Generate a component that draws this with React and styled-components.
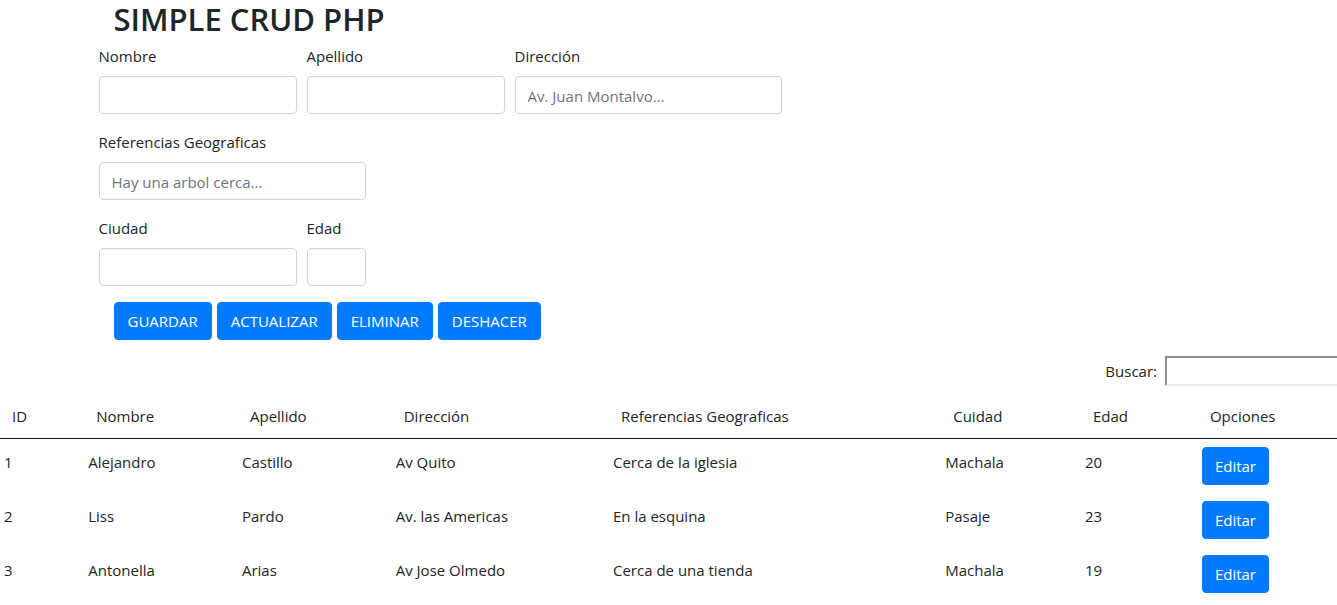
import React from "react";
import styled, { createGlobalStyle } from "styled-components";

const GlobalStyle = createGlobalStyle`
  *, *::before, *::after { box-sizing: border-box; }
  body {
    margin: 0;
    background: #fff;
    color: #212529;
    font-family: "Segoe UI", "Open Sans", "Noto Sans", sans-serif;
    font-size: 15px;
    line-height: 24px;
    overflow-x: hidden;
  }
`;

const Container = styled.main`
  max-width: 1140px;
  margin: 0 auto;
`;

const Title = styled.h1`
  margin: 0 0 6px;
  padding: 0 15px;
  font-size: 31px;
  font-weight: 600;
  line-height: 38px;
`;

const FieldGrid = styled.div`
  display: grid;
  grid-template-columns: repeat(12, 1fr);
  gap: 16px 10px;
  max-width: 822px;
`;

const Field = styled.div`
  grid-column: ${(p) => (p.$first ? "1 / " : "")}span ${(p) => p.$span};
`;

const FieldLabel = styled.label`
  display: block;
  width: max-content;
  margin-bottom: 8px;
`;

const TextInput = styled.input`
  display: block;
  width: 100%;
  height: 38px;
  padding: 7px 12px 5px;
  border: 1px solid #ced4da;
  border-radius: 4px;
  background: #fff;
  color: #495057;
  font: inherit;

  &::placeholder {
    color: #6c757d;
    opacity: 1;
  }
`;

const Actions = styled.div`
  display: flex;
  gap: 5px;
  padding: 16px 15px;
`;

const Button = styled.button`
  height: 38px;
  padding: 6px 12px;
  border: 1px solid #007bff;
  border-radius: 4px;
  background: #007bff;
  color: #fff;
  font: inherit;
  cursor: pointer;
`;

const ActionButton = styled(Button)`
  padding: 6px 13px;
`;

const SearchBar = styled.div`
  display: flex;
  justify-content: flex-end;
  align-items: center;
  gap: 8px;
`;

const SearchInput = styled.input`
  width: 172px;
  height: 30px;
  padding: 1px 2px;
  border: 2px solid;
  border-color: #8f8f8f #ededed #ededed #8f8f8f;
  border-right: 0;
  background: #fff;
  font: inherit;
`;

const Table = styled.table`
  width: 100%;
  margin-top: 9px;
  table-layout: fixed;
  border-collapse: separate;
  border-spacing: 0;
`;

const HeadCell = styled.th`
  width: ${(p) => p.$width};
  padding: 9px 12px 10px;
  border-bottom: 1px solid #111;
  font-weight: 400;
  text-align: left;
`;

const Cell = styled.td`
  padding: 8px 4px;
  vertical-align: middle;
`;

const CellText = styled.span`
  display: block;
  margin-bottom: 8px;
`;

const CellButton = styled(Button)`
  display: block;
`;

const fields = [
  { id: "nombre", label: "Nombre", span: 3 },
  { id: "apellido", label: "Apellido", span: 3 },
  { id: "direccion", label: "Dirección", span: 4, placeholder: "Av. Juan Montalvo..." },
  { id: "referencias", label: "Referencias Geograficas", span: 4, placeholder: "Hay una arbol cerca...", first: true },
  { id: "ciudad", label: "Ciudad", span: 3, first: true },
  { id: "edad", label: "Edad", span: 1 },
];

const actions = ["GUARDAR", "ACTUALIZAR", "ELIMINAR", "DESHACER"];

const columns = [
  { name: "ID", width: "6.3%" },
  { name: "Nombre", width: "11.5%" },
  { name: "Apellido", width: "11.5%" },
  { name: "Dirección", width: "16.25%" },
  { name: "Referencias Geograficas", width: "24.85%" },
  { name: "Cuidad", width: "10.45%" },
  { name: "Edad", width: "8.75%" },
  { name: "Opciones", width: "auto" },
];

const people = [
  ["1", "Alejandro", "Castillo", "Av Quito", "Cerca de la iglesia", "Machala", "20"],
  ["2", "Liss", "Pardo", "Av. las Americas", "En la esquina", "Pasaje", "23"],
  ["3", "Antonella", "Arias", "Av Jose Olmedo", "Cerca de una tienda", "Machala", "19"],
];

export default function App() {
  return (
    <>
      <GlobalStyle />
      <Container>
        <Title>SIMPLE CRUD PHP</Title>
        <form onSubmit={(e) => e.preventDefault()}>
          <FieldGrid>
            {fields.map((f) => (
              <Field key={f.id} $span={f.span} $first={f.first}>
                <FieldLabel htmlFor={f.id}>{f.label}</FieldLabel>
                <TextInput id={f.id} type="text" placeholder={f.placeholder} />
              </Field>
            ))}
          </FieldGrid>
          <Actions>
            {actions.map((a) => (
              <ActionButton key={a} type="button">{a}</ActionButton>
            ))}
          </Actions>
        </form>
      </Container>
      <SearchBar>
        <label htmlFor="buscar">Buscar:</label>
        <SearchInput id="buscar" type="search" />
      </SearchBar>
      <Table>
        <thead>
          <tr>
            {columns.map((c) => (
              <HeadCell key={c.name} scope="col" $width={c.width}>{c.name}</HeadCell>
            ))}
          </tr>
        </thead>
        <tbody>
          {people.map((row) => (
            <tr key={row[0]}>
              {row.map((value, i) => (
                <Cell key={columns[i].name}><CellText>{value}</CellText></Cell>
              ))}
              <Cell><CellButton type="button">Editar</CellButton></Cell>
            </tr>
          ))}
        </tbody>
      </Table>
    </>
  );
}
